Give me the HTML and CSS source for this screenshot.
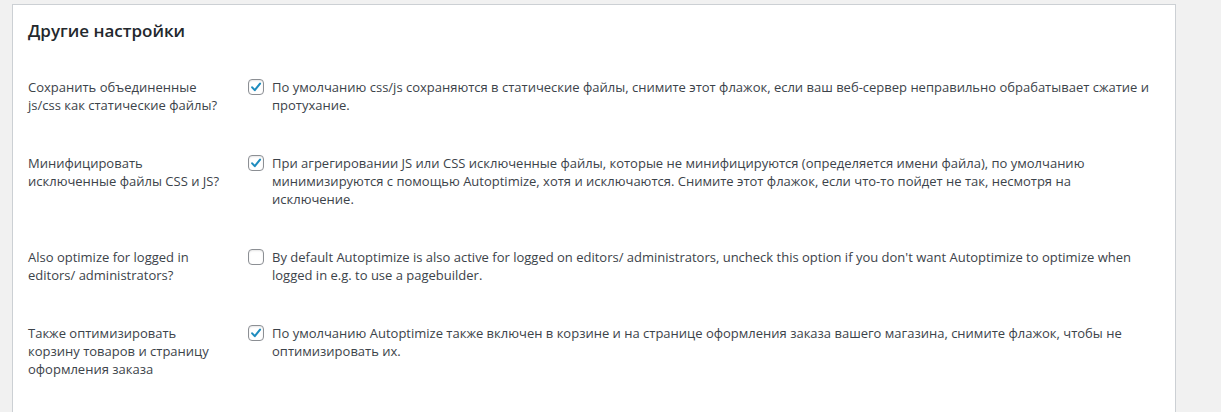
FILE: index.html
```html
<!DOCTYPE html>
<html lang="ru">
<head>
  <meta charset="UTF-8" />
  <title>Другие настройки</title>
  <link rel="stylesheet" href="styles.css">
</head>
<body>
<div class="wrap">
  <div class="postbox">
    <h2>Другие настройки</h2>

    <div class="form-table">
      <div class="row">
        <div class="th">Сохранить объединенные js/css как статические файлы?</div>
        <div class="td">
          <span class="cb checked"><svg viewBox="0 0 16 16"><path d="M3.6 8.4 L6.6 11.6 L12.6 4.2"/></svg></span>
          <p>По умолчанию css/js сохраняются в статические файлы, снимите этот флажок, если ваш веб-сервер неправильно обрабатывает сжатие и протухание.</p>
        </div>
      </div>

      <div class="row">
        <div class="th">Минифицировать исключенные файлы CSS и JS?</div>
        <div class="td">
          <span class="cb checked"><svg viewBox="0 0 16 16"><path d="M3.6 8.4 L6.6 11.6 L12.6 4.2"/></svg></span>
          <p>При агрегировании JS или CSS исключенные файлы, которые не минифицируются (определяется имени файла), по умолчанию минимизируются с помощью Autoptimize, хотя и исключаются. Снимите этот флажок, если что-то пойдет не так, несмотря на исключение.</p>
        </div>
      </div>

      <div class="row">
        <div class="th">Also optimize for logged in editors/ administrators?</div>
        <div class="td">
          <span class="cb"></span>
          <p>By default Autoptimize is also active for logged on editors/ administrators, uncheck this option if you don't want Autoptimize to optimize when logged in e.g. to use a pagebuilder.</p>
        </div>
      </div>

      <div class="row">
        <div class="th">Также оптимизировать корзину товаров и страницу оформления заказа</div>
        <div class="td">
          <span class="cb checked"><svg viewBox="0 0 16 16"><path d="M3.6 8.4 L6.6 11.6 L12.6 4.2"/></svg></span>
          <p>По умолчанию Autoptimize также включен в корзине и на странице оформления заказа вашего магазина, снимите флажок, чтобы не оптимизировать их.</p>
        </div>
      </div>
    </div>
  </div>
</div>
</body>
</html>
```

FILE: styles.css
```css
html, body {
  height: 100%;
  overflow: hidden;
}
body {
  margin: 0;
  background: #f1f1f1;
  font-family: "Open Sans", "Noto Sans", sans-serif;
  font-size: 13px;
  color: #3c434a;
}
.wrap {
  height: 100%;
  box-sizing: border-box;
  padding: 4px 45px 0 12px;
}
.postbox {
  height: 100%;
  box-sizing: border-box;
  background: #fff;
  border: 1px solid #ccd0d4;
  border-bottom: none;
  padding: 0 15px;
}
.postbox h2 {
  margin: 0;
  padding: 14px 0 15px;
  font-size: 17px;
  line-height: 24px;
  font-weight: 600;
  color: #23282d;
}
.row {
  display: flex;
}
.th {
  width: 200px;
  flex: none;
  padding: 20px 10px 20px 0;
  line-height: 18px;
}
.td {
  flex: 1;
  display: flex;
  align-items: flex-start;
  padding: 20px 10px;
}
.td p {
  margin: 0;
  line-height: 18px;
}
.cb {
  flex: none;
  width: 14px;
  height: 14px;
  border: 1px solid #8c8f94;
  border-radius: 4px;
  margin: 1px 8px 0 0;
  box-shadow: inset 0 1px 2px rgba(0,0,0,0.1);
}
.cb svg {
  display: block;
  width: 14px;
  height: 14px;
}
.cb svg path {
  fill: none;
  stroke: #1e8cbe;
  stroke-width: 2.4;
  stroke-linecap: round;
  stroke-linejoin: round;
}
```
